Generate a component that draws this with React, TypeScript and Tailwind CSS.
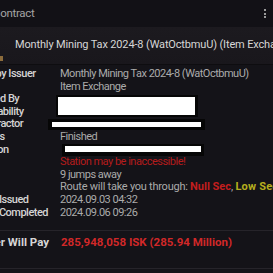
import React from "react";

const font = { fontFamily: 'Roboto, "Noto Sans", sans-serif' };

function Redact({ outer, inner }: { outer: string; inner: string }) {
  return (
    <div className={"bg-[#060606] shrink-0 " + outer}>
      <div className={"bg-white " + inner} />
    </div>
  );
}

const labels: { t: string; c?: string }[] = [
  { t: "Info by Issuer" },
  { t: "" },
  { t: "Issued By" },
  { t: "Availability" },
  { t: "Contractor" },
  { t: "Status" },
  { t: "Location", c: "-ml-[6px]" },
  { t: "" },
  { t: "" },
  { t: "" },
  { t: "Date Issued" },
  { t: "Date Completed" },
];

export default function App() {
  return (
    <div
      className="w-[273px] h-[273px] overflow-hidden bg-[#141318] text-[11px] leading-[12.6px] tracking-[-0.5px]"
      style={font}
    >
      {/* window title bar */}
      <div className="h-[27px] bg-[#121116] flex items-center justify-between pr-[7px]">
        <span className="text-[#a4a4a4] text-[11.5px] tracking-[-0.3px] -ml-[7px]">Contract</span>
        <div className="flex flex-col gap-[1.5px]">
          <div className="w-[2px] h-[2px] bg-[#9a9a9a]" />
          <div className="w-[2px] h-[2px] bg-[#9a9a9a]" />
          <div className="w-[2px] h-[2px] bg-[#9a9a9a]" />
        </div>
      </div>

      {/* contract title band */}
      <div className="h-[38px] bg-gradient-to-b from-[#1c1a1f] to-[#19171c] flex items-center border-b border-[#0e0d10] relative">
        <span className="ml-[15px] text-[#d6d6d6] tracking-[-0.15px] whitespace-nowrap">
          Monthly Mining Tax 2024-8 (WatOctbmuU) (Item Exchange)
        </span>
        <div className="absolute left-0 bottom-[3px] w-[3px] h-[5px] bg-[#8c6c3c]" />
      </div>

      {/* detail rows */}
      <div className="pt-[3px] flex">
        <div className="w-[60px] shrink-0 overflow-hidden">
          <div className="-ml-[24px] flex flex-col text-[#d4d4d4] font-medium whitespace-nowrap">
            {labels.map((l, i) => (
              <span key={i} className={"h-[12.6px] " + (l.c ?? "")}>
                {l.t || "\u00a0"}
              </span>
            ))}
          </div>
        </div>
        <div className="flex-1 flex flex-col text-[#ababab] whitespace-nowrap">
          <span className="h-[12.6px]">Monthly Mining Tax 2024-8 (WatOctbmuU)</span>
          <span className="h-[12.6px]">Item Exchange</span>
          <div className="h-[25.2px] flex items-center -ml-[4px]">
            <Redact outer="w-[142px] h-[22px] py-[2px] pl-[2px] pr-[3px]" inner="w-full h-full" />
          </div>
          <div className="h-[12.6px] flex items-center -ml-[12px]">
            <Redact outer="w-[157px] h-[11px] pt-[3px] pb-[3px] pl-[4px] pr-[4px]" inner="w-full h-full" />
          </div>
          <span className="h-[12.6px]">Finished</span>
          <div className="h-[12.6px] flex items-center ml-[2px]">
            <Redact outer="w-[142px] h-[12px] pt-[2px] pl-[3px] pr-[3px]" inner="w-full h-[6px]" />
          </div>
          <span className="h-[12.6px] text-[#b41c1c]">Station may be inaccessible!</span>
          <span className="h-[12.6px]">9 jumps away</span>
          <span className="h-[12.6px] tracking-[-0.25px]">
            Route will take you through: <span className="text-[#c21e1e] font-bold tracking-[0px]">Null Sec</span>,{" "}
            <span className="text-[#b6ae1e] font-bold tracking-[0.2px]">Low Sec</span>, High Sec
          </span>
          <span className="h-[12.6px]">2024.09.03 04:32</span>
          <span className="h-[12.6px]">2024.09.06 09:26</span>
        </div>
      </div>

      {/* total */}
      <div className="mt-[11px] border-t border-[#26242a] h-[38px] flex items-start pt-[5px]">
        <div className="w-[60px] shrink-0 overflow-hidden">
          <div className="-ml-[25px] text-[#d6d6d6] whitespace-nowrap font-bold text-[11.5px] tracking-[0px]">
            Buyer Will Pay
          </div>
        </div>
        <span className="ml-[1px] text-[#d12828] font-bold text-[11.5px] tracking-[0px] whitespace-nowrap">
          285,948,058 ISK (285.94 Million)
        </span>
      </div>
      <div className="border-t border-[#26242a]" />
    </div>
  );
}
